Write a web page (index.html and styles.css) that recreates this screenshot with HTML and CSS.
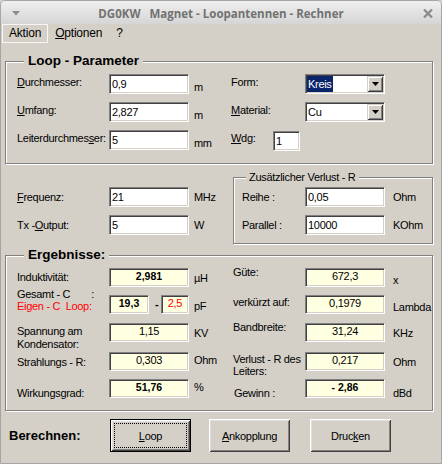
FILE: index.html
```html
<!DOCTYPE html>
<html>
<head>
<meta charset="utf-8">
<link rel="stylesheet" href="styles.css">
</head>
<body>
<div class="window">
  <div class="titlebar">
    <svg class="tb-arrow" width="8" height="5" viewBox="0 0 8 5"><polygon points="0,0 8,0 4,4.5" fill="#8d8d8d"/></svg>
    <div class="tb-title">DG0KW&nbsp;&nbsp; Magnet - Loopantennen - Rechner</div>
    <svg class="tb-close" width="10" height="9" viewBox="0 0 10 9"><path d="M1 0.5 L9 8.5 M9 0.5 L1 8.5" stroke="#8a8a8a" stroke-width="2.2"/></svg>
  </div>
  <div class="menubar">
    <span class="mi active">Aktion</span>
    <span class="mi"><u>O</u>ptionen</span>
    <span class="mi">?</span>
  </div>
  <div class="content">
    <div class="group loop">
      <div class="legend bold">Loop - Parameter</div>
      <div class="loopgrid">
        <div class="lbl up"><u>D</u>urchmesser:</div>
        <div class="edit">0,9</div>
        <div class="unit dn">m</div>
        <div class="lbl up">Form:</div>
        <div class="combo"><div class="ctext"><span class="hl">Kreis</span></div><div class="cbtn"><svg width="7" height="4" viewBox="0 0 7 4"><polygon points="0,0 7,0 3.5,4" fill="#000"/></svg></div></div>
        <div></div>

        <div class="lbl up"><u>U</u>mfang:</div>
        <div class="edit">2,827</div>
        <div class="unit dn">m</div>
        <div class="lbl up"><u>M</u>aterial:</div>
        <div class="combo"><div class="ctext"><span class="plain">Cu</span></div><div class="cbtn"><svg width="7" height="4" viewBox="0 0 7 4"><polygon points="0,0 7,0 3.5,4" fill="#000"/></svg></div></div>
        <div></div>

        <div class="lbl up">Leiterdurchmes<u>s</u>er:</div>
        <div class="edit">5</div>
        <div class="unit dn">mm</div>
        <div class="wdg"><div class="lbl up wlbl"><u>W</u>dg:</div><div class="edit wedit">1</div></div>
        <div></div>
        <div></div>
      </div>
    </div>

    <div class="middle">
      <div class="freq">
        <div class="lbl c"><u>F</u>requenz:</div>
        <div class="edit">21</div>
        <div class="unit c">MHz</div>
        <div class="lbl c">Tx -<u>O</u>utput:</div>
        <div class="edit">5</div>
        <div class="unit c">W</div>
      </div>
      <div class="group verlust">
        <div class="legend small">Zusätzlicher Verlust - R</div>
        <div class="vgrid">
          <div class="lbl c">Reihe :</div>
          <div class="edit">0,05</div>
          <div class="unit c">Ohm</div>
          <div class="lbl c">Parallel :</div>
          <div class="edit">10000</div>
          <div class="unit c">KOhm</div>
        </div>
      </div>
    </div>

    <div class="group results">
      <div class="legend bold">Ergebnisse:</div>
      <div class="rgrid">
        <div class="rl m3">Induktivität:</div>
        <div class="res b">2,981</div>
        <div class="ru m4">µH</div>
        <div class="rl m-2">Güte:</div>
        <div class="res">672,3</div>
        <div class="ru2 m6">x</div>

        <div class="rl two m-7"><span class="gc">Gesamt - C<span class="colon">:</span></span><span class="red">Eigen - C&nbsp; Loop:</span></div>
        <div class="cpair"><div class="res b w40">19,3</div><span class="dash">-</span><div class="res red w28">2,5</div></div>
        <div class="ru m5">pF</div>
        <div class="rl m1">verkürzt auf:</div>
        <div class="res">0,1979</div>
        <div class="ru2 m6">Lambda</div>

        <div class="rl two13 m2">Spannung am<br>Kondensator:</div>
        <div class="res">1,15</div>
        <div class="ru m4">KV</div>
        <div class="rl m-2">Bandbreite:</div>
        <div class="res">31,24</div>
        <div class="ru2 m4">KHz</div>

        <div class="rl m4">Strahlungs - R:</div>
        <div class="res">0,303</div>
        <div class="ru m2">Ohm</div>
        <div class="rl two m1">Verlust - R des<br>Leiters:</div>
        <div class="res">0,217</div>
        <div class="ru2 m4">Ohm</div>

        <div class="rl m8">Wirkungsgrad:</div>
        <div class="res b">51,76</div>
        <div class="ru m2">%</div>
        <div class="rl gew m8">Gewinn :</div>
        <div class="res b">- 2,86</div>
        <div class="ru2 m8">dBd</div>
      </div>
    </div>

    <div class="actions">
      <div class="blabel">Berechnen:</div>
      <div class="btn default"><span class="focus"><u>L</u>oop</span></div>
      <div class="btn b2"><span><u>A</u>nkopplung</span></div>
      <div class="btn b3"><span>Druc<u>k</u>en</span></div>
    </div>
  </div>
</div>
</body>
</html>
```
FILE: styles.css
```css
* { box-sizing: border-box; }
html, body { margin: 0; padding: 0; }
body {
  width: 442px;
  height: 464px;
  overflow: hidden;
  background: #d4d0c8;
  font-family: "Liberation Sans", Arial, sans-serif;
  font-size: 11px;
  letter-spacing: -0.3px;
  color: #000;
}
u { text-decoration: underline; text-underline-offset: 1px; }

.window {
  width: 442px;
  height: 464px;
  border: 1px solid #a5a5a5;
  border-radius: 5px 5px 0 0;
  background: #d4d0c8;
  overflow: hidden;
}

/* title bar */
.titlebar {
  height: 23px;
  background: linear-gradient(#efefef, #d5d5d5);
  display: grid;
  grid-template-columns: 1fr auto 1fr;
  align-items: center;
}
.tb-arrow { margin-left: 11px; margin-top: 1px; }
.tb-title {
  font-family: "Open Sans", "Noto Sans", sans-serif;
  font-weight: 700;
  font-size: 11.5px;
  letter-spacing: 0;
  color: #727272;
  margin-top: 1px;
}
.tb-close { justify-self: end; margin-right: 8px; margin-top: 1px; }

/* menu */
.menubar {
  height: 19px;
  display: flex;
  align-items: stretch;
  padding-left: 1px;
  font-size: 12px;
  letter-spacing: -0.2px;
}
.mi { padding: 0 6px; line-height: 17px; border: 1px solid transparent; }
.mi.active { border-color: #f6f6f6; }

/* content */
.content { padding: 0 8px 0 4px; }

.group {
  border: 1px solid #808080;
  box-shadow: inset 1px 1px #fff, 1px 1px #fff;
}
.legend {
  width: fit-content;
  background: #d4d0c8;
}
.legend.bold {
  font-weight: 700;
  font-size: 13.5px;
  letter-spacing: 0;
  line-height: 16px;
  margin: -9px 0 0 7px;
  padding: 0 4px;
}
.legend.small {
  line-height: 13px;
  margin: -7px 0 0 4px;
  padding: 0 3px;
}

.loop { margin-top: 18px; padding: 0 0 13px 11px; }
.loopgrid {
  margin-top: 5px;
  display: grid;
  grid-template-columns: 92px 80px 42px 74px 80px 1fr;
  grid-auto-rows: 20px;
  row-gap: 8px;
}
.lbl { white-space: nowrap; }
.lbl.up { align-self: start; line-height: 16px; }
.lbl.c, .unit.c { line-height: 20px; }
.unit { white-space: nowrap; padding-left: 5px; }
.unit.dn { align-self: end; line-height: 14px; }

.edit {
  height: 20px;
  background: #fff;
  border: 1px solid;
  border-color: #808080 #fff #fff #808080;
  box-shadow: inset 1px 1px #404040, inset -1px -1px #d4d0c8;
  padding: 0 2px 0 2px;
  line-height: 18px;
  white-space: nowrap;
}
.wdg { display: flex; align-items: flex-start; }
.wlbl { width: 42px; }
.wedit { width: 27px; margin-top: 1px; }

.combo {
  height: 20px;
  background: #fff;
  border: 1px solid;
  border-color: #808080 #fff #fff #808080;
  box-shadow: inset 1px 1px #404040, inset -1px -1px #d4d0c8;
  padding: 1px;
  display: flex;
}
.ctext { flex: 1; line-height: 16px; }
.hl { background: #0a246a; color: #fff; padding: 0 1px; display: inline-block; }
.plain { padding: 0 1px; }
.cbtn {
  width: 16px;
  height: 16px;
  background: #d4d0c8;
  box-shadow: inset 1px 1px #d4d0c8, inset -1px -1px #404040, inset 2px 2px #fff, inset -2px -2px #808080;
  display: flex;
  align-items: center;
  justify-content: center;
}

/* middle */
.middle { display: flex; height: 80px; }
.freq {
  width: 228px;
  padding: 23px 0 0 12px;
  display: grid;
  grid-template-columns: 92px 80px auto;
  grid-auto-rows: 20px;
  row-gap: 8px;
  align-content: start;
}
.verlust { width: 200px; margin-top: 13px; height: 67px; padding: 0 0 0 8px; }
.vgrid {
  margin-top: 3px;
  display: grid;
  grid-template-columns: 63px 80px auto;
  grid-auto-rows: 20px;
  row-gap: 8px;
}
.vgrid .unit { padding-left: 8px; }

/* results */
.results { margin-top: 11px; padding: 0 0 12px 11px; }
.rgrid {
  margin-top: 5px;
  display: grid;
  grid-template-columns: 92px 80px 44px 72px 80px 1fr;
  grid-template-rows: 27px 28px 29px 27px 19px;
  align-items: start;
}
.rl { line-height: 13px; white-space: nowrap; }
.rl.two { line-height: 12px; display: flex; flex-direction: column; }
.rl.two13 { line-height: 13px; }
.gew { padding-left: 1px; }
.ru { line-height: 13px; padding-left: 5px; }
.ru2 { line-height: 13px; padding-left: 8px; }
.gc { display: flex; }
.colon { margin-left: 21px; }
.red { color: #ff0000; }
.m-7 { margin-top: -7px; }
.m-2 { margin-top: -2px; }
.m1 { margin-top: 1px; }
.m2 { margin-top: 2px; }
.m3 { margin-top: 3px; }
.m4 { margin-top: 4px; }
.m5 { margin-top: 5px; }
.m6 { margin-top: 6px; }
.m8 { margin-top: 8px; }

.res {
  height: 19px;
  background: #ffffe1;
  border: 1px solid;
  border-color: #808080 #fff #fff #808080;
  box-shadow: inset 1px 1px #404040, inset -1px -1px #d4d0c8;
  text-align: center;
  line-height: 15px;
  white-space: nowrap;
}
.res.b { font-weight: 700; letter-spacing: 0; font-size: 10.5px; }
.cpair { display: flex; align-items: flex-start; }
.w40 { width: 40px; }
.w28 { width: 28px; margin-left: auto; }
.dash { font-weight: 700; line-height: 19px; margin-left: 6px; }

/* actions */
.actions {
  margin-top: 8px;
  display: flex;
  align-items: center;
  height: 33px;
}
.blabel {
  width: 105px;
  padding-left: 4px;
  font-weight: 700;
  font-size: 13px;
  letter-spacing: 0;
}
.btn {
  width: 81px;
  height: 33px;
  background: #d4d0c8;
  box-shadow: inset 1px 1px #fff, inset -1px -1px #404040, inset 2px 2px #dfdfdf, inset -2px -2px #808080;
  display: flex;
  align-items: center;
  justify-content: center;
}
.btn.default {
  border: 1px solid #000;
  padding: 3px;
}
.btn.default .focus {
  flex: 1;
  align-self: stretch;
  border: 1px dotted #000;
  display: flex;
  align-items: center;
  justify-content: center;
}
.b2 { margin-left: 18px; }
.b3 { margin-left: 20px; }
```
